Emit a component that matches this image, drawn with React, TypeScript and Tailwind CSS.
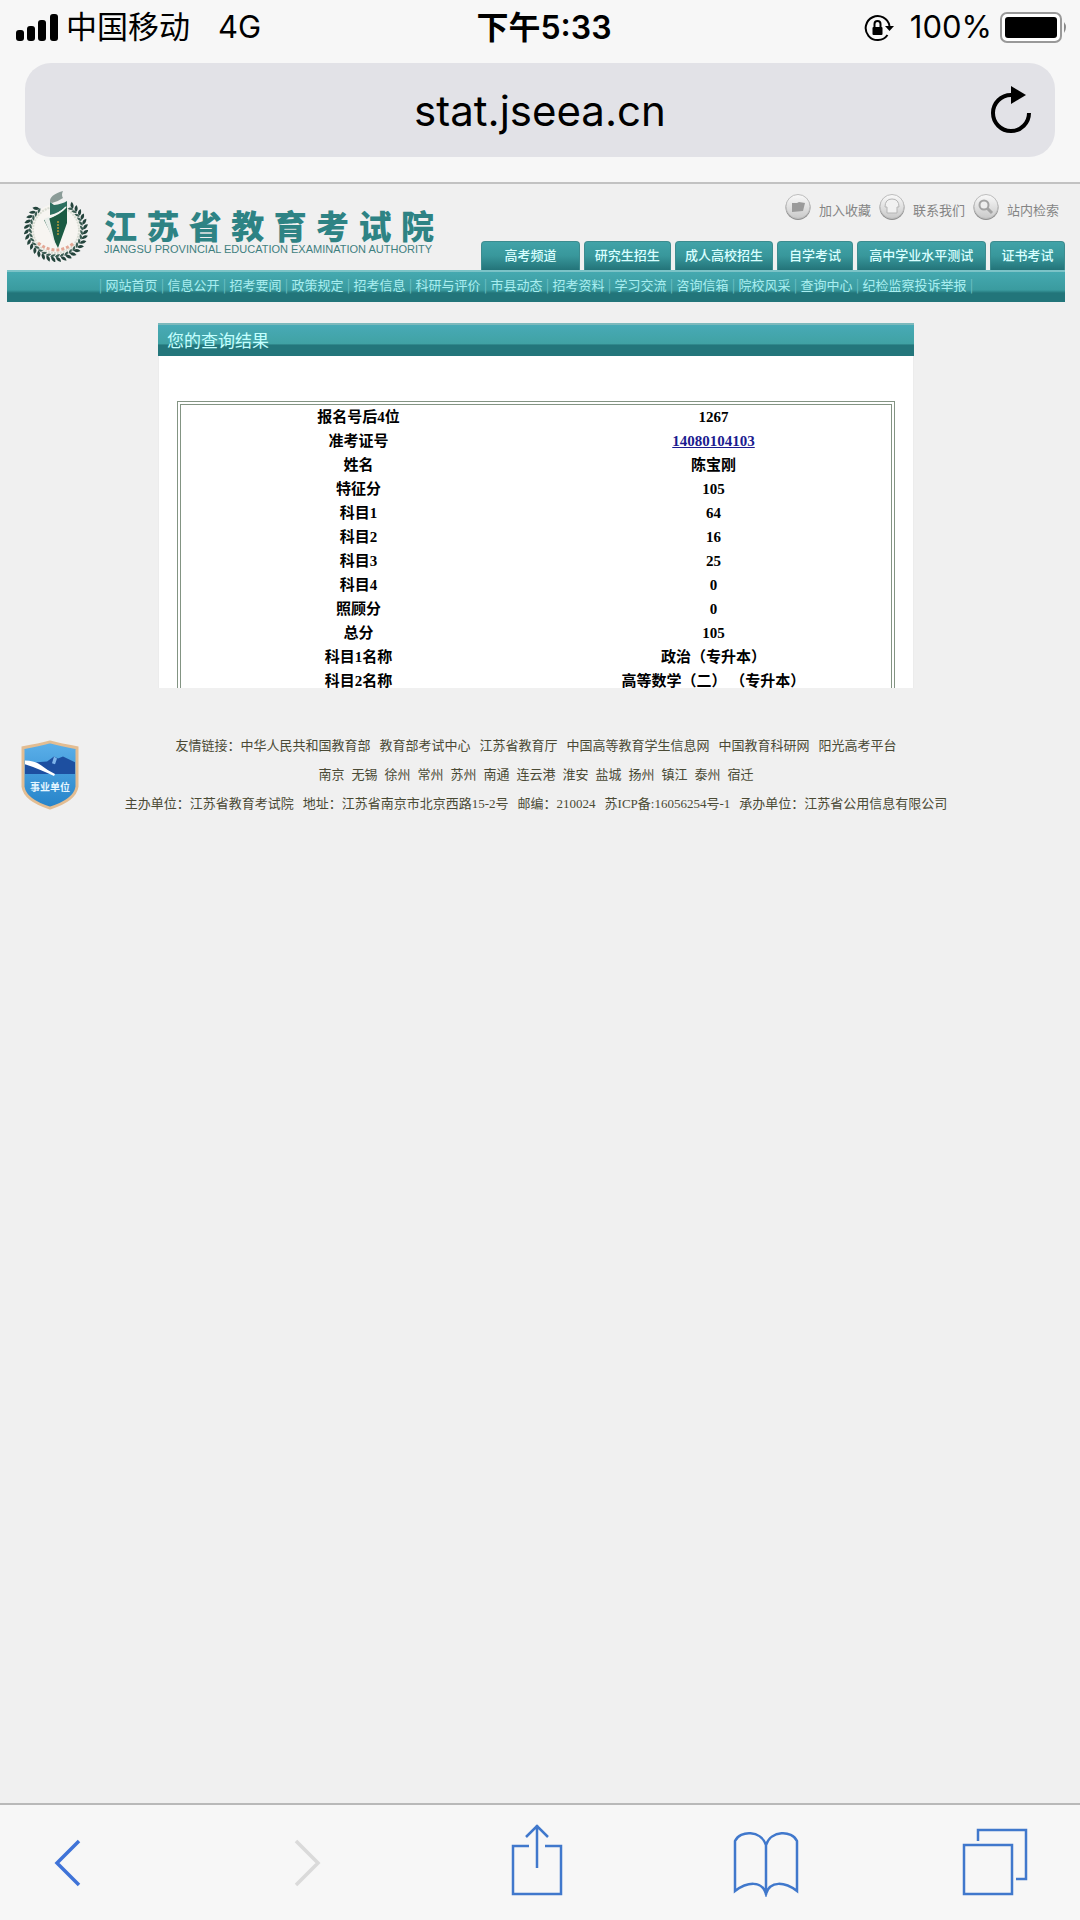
import React from "react";

const tabs = [
  { label: "高考频道", cls: "grow-[98]" },
  { label: "研究生招生", cls: "grow-[86]" },
  { label: "成人高校招生", cls: "grow-[98]" },
  { label: "自学考试", cls: "grow-[74]" },
  { label: "高中学业水平测试", cls: "grow-[129]" },
  { label: "证书考试", cls: "grow-[74]" },
];

const nav = ["网站首页", "信息公开", "招考要闻", "政策规定", "招考信息", "科研与评价", "市县动态", "招考资料", "学习交流", "咨询信箱", "院校风采", "查询中心", "纪检监察投诉举报"];

const rows: [string, string][] = [
  ["报名号后4位", "1267"],
  ["准考证号", "14080104103"],
  ["姓名", "陈宝刚"],
  ["特征分", "105"],
  ["科目1", "64"],
  ["科目2", "16"],
  ["科目3", "25"],
  ["科目4", "0"],
  ["照顾分", "0"],
  ["总分", "105"],
  ["科目1名称", "政治（专升本）"],
  ["科目2名称", "高等数学（二） （专升本）"],
];

const friendLinks = ["友情链接：中华人民共和国教育部", "教育部考试中心", "江苏省教育厅", "中国高等教育学生信息网", "中国教育科研网", "阳光高考平台"];
const cities = ["南京", "无锡", "徐州", "常州", "苏州", "南通", "连云港", "淮安", "盐城", "扬州", "镇江", "泰州", "宿迁"];

const leaves = Array.from({ length: 29 }, (_, i) => -52 + i * 10.15);

function Emblem() {
  return (
    <svg viewBox="0 0 64 71" className="h-[71px] w-16 shrink-0" aria-label="院徽" role="img">
      <circle cx="32" cy="39" r="26" fill="#f7f5f1" />
      <circle cx="32" cy="39" r="23" fill="none" stroke="#d9ddd3" strokeWidth="2" strokeDasharray="2 1" />
      {leaves.map((a) => (
        <g key={a} transform={`rotate(${a} 32 39)`}>
          <path d="M59 39q4 0 5-5q-5 0-5 5z" fill="#24443c" />
          <path d="M59 40q-3-1-3-5q4 1 3 5z" fill="#3b5d53" />
        </g>
      ))}
      <path d="M14 52q18 14 36 0" fill="none" stroke="#e3a795" strokeWidth="3" strokeDasharray="3 2" />
      <path d="M26 11Q25 4 39 0q-2 4 0 7q-4 3-11 5z" fill="#8b9c98" />
      <path d="M26 11l4 3q8-1 13-4l0 5q-8 7-17 9z" fill="#2c6f60" />
      <path d="M43 15l0 17l-9 25l-14-28q14-4 23-14z" fill="#1c5b43" />
      <path d="M24 27q12-4 18-11" fill="none" stroke="#f1f5f2" strokeWidth="1.500" />
      <path d="M20 28l5-2l7 30z" fill="#e9eeea" />
      <path d="M34 30v14" stroke="#8f8a3d" strokeWidth="2" strokeDasharray="2 1" />
    </svg>
  );
}

function Shield() {
  return (
    <svg viewBox="0 0 58 72" className="h-[70px] w-[58px] shrink-0" preserveAspectRatio="none" aria-label="事业单位" role="img">
      <defs>
        <linearGradient id="sh" x1="0" y1="0" x2="0" y2="1">
          <stop offset="0" stopColor="#5cb0ea" />
          <stop offset="1" stopColor="#2583c9" />
        </linearGradient>
      </defs>
      <path d="M2 8Q18 5 29 2Q40 5 56 8V48Q54 62 29 70Q4 62 2 48z" fill="url(#sh)" stroke="#e3bd92" strokeWidth="3" />
      <path d="M4 25l12-2l10-1l7-5l4 2l5-2l12 6v12H4z" fill="#1d4fa0" />
      <path d="M4 21q10 0 16 5t14 9l-1 2q-6-3-13-6T4 25z" fill="#fff" />
      <path d="M33 17l3 2l-2 6l-3-1z" fill="#7fb5ea" />
      <text x="29" y="52" textAnchor="middle" fontSize="10" fontWeight="700" fill="#e6f6ff" fontFamily="Noto Sans CJK SC">事业单位</text>
    </svg>
  );
}

function RoundIcon({ children }: { children: React.ReactNode }) {
  return (
    <svg viewBox="0 0 28 28" className="size-7" aria-hidden="true">
      <defs>
        <linearGradient id="ri" x1="0" y1="0" x2="0" y2="1">
          <stop offset="0" stopColor="#fafafa" />
          <stop offset="1" stopColor="#c9c9c9" />
        </linearGradient>
      </defs>
      <circle cx="14" cy="14.500" r="12.500" fill="#8f8f8f" />
      <circle cx="14" cy="13.500" r="12" fill="url(#ri)" stroke="#bdbdbd" strokeWidth="1" />
      {children}
    </svg>
  );
}

export default function App() {
  return (
    <div className="flex min-h-screen flex-col bg-[#f0f0f0] font-['Liberation_Serif','Noto_Sans_CJK_SC',serif]">
      <header className="border-b-2 border-[#c2c2c2] bg-[#f7f7f7] pb-[25px] font-['Inter','Noto_Sans_CJK_SC',sans-serif] text-black">
        <div className="grid h-[63px] grid-cols-3 items-center pr-3 pb-2 pl-4 text-[31px]">
          <div className="flex items-center">
            <svg viewBox="0 0 42 28" className="h-7 w-[42px]" aria-hidden="true">
              <rect x="0" y="16" width="8" height="11" rx="3" />
              <rect x="11" y="12" width="8" height="15" rx="3" />
              <rect x="22" y="6" width="8" height="21" rx="3" />
              <rect x="34" y="0" width="8" height="27" rx="3" />
            </svg>
            <span className="ml-2">中国移动</span>
            <span className="ml-7">4G</span>
          </div>
          <div className="pl-1 text-center text-[32px] font-semibold">下午5:33</div>
          <div className="flex items-center justify-end">
            <svg viewBox="0 0 30 28" className="h-7 w-[30px]" fill="none" stroke="#000" strokeWidth="2" aria-hidden="true">
              <path d="M25.500 12A12 12 0 1 0 23.500 21" />
              <path d="M21 12h9l-4.500 5z" fill="#000" stroke="none" />
              <rect x="8.500" y="13" width="10" height="8" rx="1" fill="#000" stroke="none" />
              <path d="M10.500 14v-4a3 3 0 0 1 6 0v4" />
            </svg>
            <span className="ml-4">100%</span>
            <svg viewBox="0 0 68 31" className="ml-2 h-[31px] w-[68px]" aria-hidden="true">
              <rect x="1" y="1" width="60" height="29" rx="6" fill="#fff" stroke="#999" strokeWidth="2" />
              <rect x="5" y="5" width="52" height="21" rx="3" />
              <path d="M64 10q4 5 0 11z" fill="#888" />
            </svg>
          </div>
        </div>
        <div className="mx-[25px] grid h-[94px] grid-cols-[1fr_auto_1fr] items-center rounded-[26px] bg-[#e2e2e7]">
          <a href="#" className="col-start-2 text-[42px]">stat.jseea.cn</a>
          <button aria-label="重新载入" className="mr-6 justify-self-end">
            <svg viewBox="0 0 40 48" className="h-12 w-10" aria-hidden="true">
              <path d="M20 9A18 18 0 1 0 38 27" fill="none" stroke="#000" strokeWidth="4" />
              <path d="M20 0v18l15-9z" />
            </svg>
          </button>
        </div>
      </header>

      <main className="grow">
        <div className="mr-[15px] ml-[7px]">
          <div className="flex items-end justify-between">
            <div className="flex pb-2 pl-[17px]">
              <Emblem />
              <div className="ml-4 flex w-[330px] flex-col pt-4">
                <div className="flex justify-between font-['Noto_Sans_CJK_SC',sans-serif] text-[33px] leading-9 font-black text-[#2e8384]">
                  {"江苏省教育考试院".split("").map((c) => <span key={c}>{c}</span>)}
                </div>
                <div className="font-['Liberation_Sans',sans-serif] text-[11px] leading-3 whitespace-nowrap text-[#3f7f80]">
                  JIANGSU PROVINCIAL EDUCATION EXAMINATION AUTHORITY
                </div>
              </div>
            </div>
            <div className="w-[584px]">
              <div className="flex h-[57px] items-center justify-end gap-[7px] pr-1.5 pb-3 font-['Noto_Sans_CJK_SC',sans-serif] text-[13px] text-[#858585]">
                <a href="#" className="flex items-center gap-[7px]">
                  <RoundIcon><path d="M8 10h5l2-1l6 1l-2 8l-11 1z" fill="#9a9a9a" /></RoundIcon>
                  <span className="pt-1.5">加入收藏</span>
                </a>
                <a href="#" className="flex items-center gap-[7px]">
                  <RoundIcon><path d="M7 14q0-8 7-8t7 8h-2v6H9v-6z" fill="#f1f1f1" stroke="#b5b5b5" /></RoundIcon>
                  <span className="pt-1.5">联系我们</span>
                </a>
                <a href="#" className="flex items-center gap-[7px]">
                  <RoundIcon><circle cx="12" cy="12" r="4.500" fill="#eee" stroke="#a3a3a3" strokeWidth="2" /><path d="M15 15l5 5" stroke="#a3a3a3" strokeWidth="3" /></RoundIcon>
                  <span className="pt-1.5">站内检索</span>
                </a>
              </div>
              <div className="flex gap-1">
                {tabs.map((t) => (
                  <a key={t.label} href="#" className={`${t.cls} h-[29px] basis-0 rounded-t-[4px] border-x border-t border-[#3c8c8f] bg-linear-to-b from-[#41a3a8] via-[#38979b] to-[#237479] text-center font-['Noto_Sans_CJK_SC',sans-serif] text-[13px] leading-[26px] font-medium whitespace-nowrap text-[#d9ffff]`}>
                    {t.label}
                  </a>
                ))}
              </div>
            </div>
          </div>
          <nav className="flex h-8 justify-center border-t-2 border-[#7cc3c7] bg-linear-to-b from-[#45a9b0] from-0% via-[#3a9b9f] via-60% to-[#22757a] to-70% font-['Noto_Sans_CJK_SC',sans-serif] text-[13px] leading-[26px] text-[#a9eef0]">
            <span className="w-[10px] text-center text-[#6fc0c4]">|</span>
            {nav.map((n) => (
              <span key={n} className="flex whitespace-nowrap">
                <a href="#">{n}</a>
                <span className="w-[10px] text-center text-[#6fc0c4]">|</span>
              </span>
            ))}
          </nav>
        </div>

        <section className="mt-[21px] mr-[166px] ml-[158px]">
          <h1 className="h-[33px] border-t-2 border-[#7cb9bc] bg-linear-to-b from-[#48aab6] from-0% via-[#40a2a4] via-60% to-[#23767b] to-65% pl-[9px] font-['Noto_Sans_CJK_SC',sans-serif] text-[17px] leading-[29px] text-[#c4ffff]">
            您的查询结果
          </h1>
          <div className="h-[332px] overflow-hidden border-x border-[#ececec] bg-white px-[18px] pt-[45px]">
            <div className="border-4 border-double border-[#839483]">
              <table className="w-full table-fixed text-center text-[15px] font-bold text-black">
                <tbody>
                  {rows.map(([k, v]) => (
                    <tr key={k} className="h-6">
                      <th scope="row" className="p-0 leading-6">{k}</th>
                      <td className="p-0 leading-6">
                        {v === "14080104103" ? <a href="#" className="text-[#1b1b8f] underline">{v}</a> : v}
                      </td>
                    </tr>
                  ))}
                </tbody>
              </table>
            </div>
          </div>
        </section>

        <footer className="mt-[43px] flex items-center pr-2 pl-[21px] text-[13px] leading-[29px] text-[#4a4a35]">
          <Shield />
          <div className="grow pr-[79px]">
            <div className="flex justify-center gap-[9px]">
              {friendLinks.map((l) => <a key={l} href="#">{l}</a>)}
            </div>
            <div className="flex justify-center gap-[7px]">
              {cities.map((l) => <a key={l} href="#">{l}</a>)}
            </div>
            <div className="flex justify-center gap-[9px]">
              <span>主办单位：江苏省教育考试院</span>
              <span>地址：江苏省南京市北京西路15-2号</span>
              <span>邮编：210024</span>
              <a href="#">苏ICP备:16056254号-1</a>
              <span>承办单位：江苏省公用信息有限公司</span>
            </div>
          </div>
        </footer>
      </main>

      <nav className="flex h-[117px] items-start justify-between border-t-2 border-[#b9b9b9] bg-[#f7f7f7] pt-4 pr-[52px] pl-[46px]">
        <button aria-label="后退" className="w-[66px] pt-[18px] pl-2">
          <svg viewBox="0 0 28 48" className="h-12 w-7" fill="none" stroke="#3f73d8" strokeWidth="3.500" aria-hidden="true"><path d="M25 2L3 24l22 22" /></svg>
        </button>
        <button aria-label="前进" disabled className="flex w-[66px] justify-center pt-[18px]">
          <svg viewBox="0 0 28 48" className="h-12 w-7" fill="none" stroke="#dadada" strokeWidth="3.500" aria-hidden="true"><path d="M2 2l22 22L2 46" /></svg>
        </button>
        <button aria-label="分享" className="flex w-[66px] justify-center">
          <svg viewBox="0 0 52 76" className="h-[76px] w-[52px]" fill="none" stroke="#4078cc" strokeWidth="2.500" aria-hidden="true">
            <path d="M18 25H2v48h48V25H34M26 47V4M15 16L26 5l11 11" />
          </svg>
        </button>
        <button aria-label="书签">
          <svg viewBox="0 0 66 76" className="h-[76px] w-[66px]" fill="none" stroke="#4078cc" strokeWidth="2.500" aria-hidden="true">
            <path d="M33 74V24M33 24C28 9 7 9 2 20V70C14 61 29 59 33 73C37 59 52 61 64 70V20C59 9 38 9 33 24" />
          </svg>
        </button>
        <button aria-label="标签页">
          <svg viewBox="0 0 66 76" className="h-[76px] w-[66px]" fill="none" stroke="#4078cc" strokeWidth="2.500" aria-hidden="true">
            <path d="M2 24h48v49H2zM16 20V9h48v49H54" />
          </svg>
        </button>
      </nav>
    </div>
  );
}
